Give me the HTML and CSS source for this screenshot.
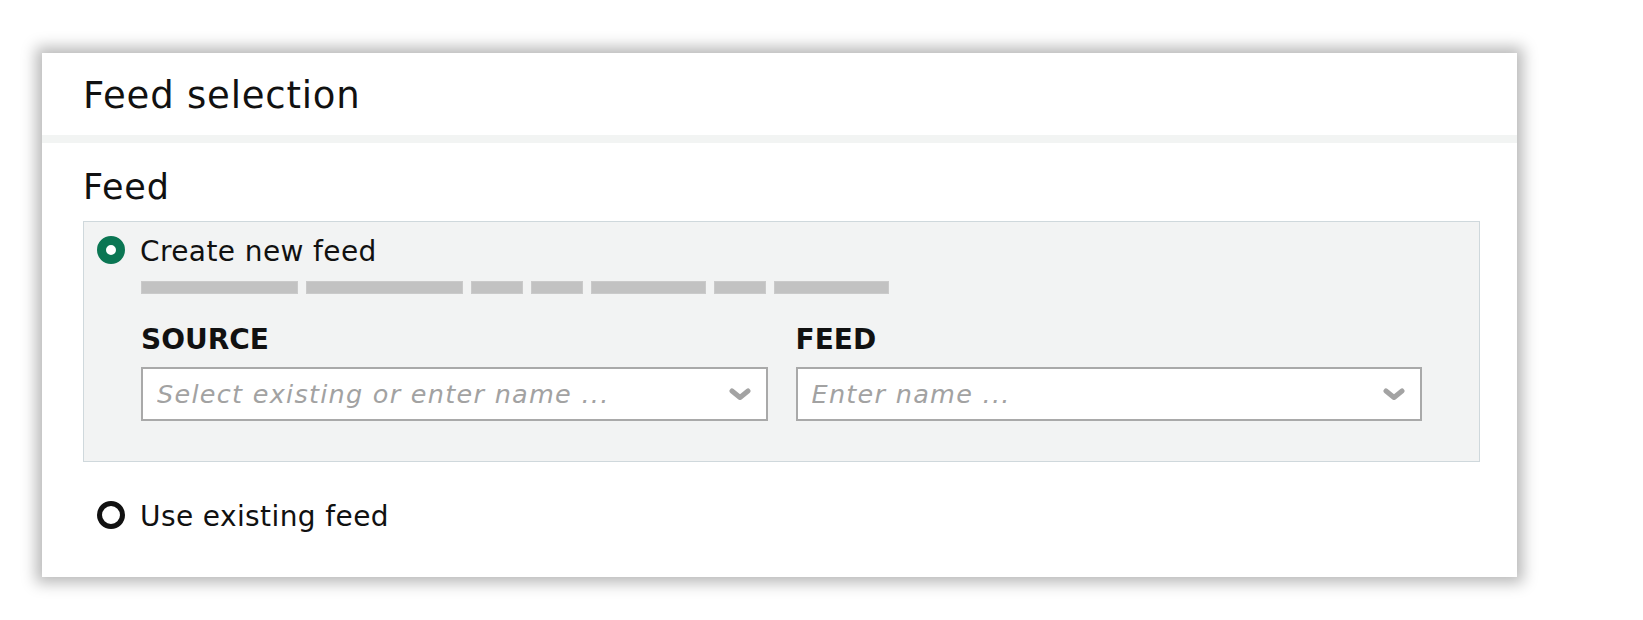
FILE: index.html
```html
<!DOCTYPE html>
<html lang="en">
<head>
  <meta charset="UTF-8">
  <title>Feed selection</title>
  <link rel="stylesheet" href="styles.css">
</head>

<body>

  <div class="panel">
    <div class="panel-header">
      <h1>Feed selection</h1>
    </div>

    <div class="panel-body">
      <h2 class="field-title">Feed</h2>

      <!-- Option 1: new feed, expanded -->
      <div class="option-box">
        <label class="radio-row">
          <input type="radio" name="feed-mode" checked>
          <span>Create new feed</span>
        </label>

        <div class="option-details">
          <div class="skeleton">
            <span class="bar w-lg"></span>
            <span class="bar w-lg"></span>
            <span class="bar w-sm"></span>
            <span class="bar w-sm"></span>
            <span class="bar w-md"></span>
            <span class="bar w-sm"></span>
            <span class="bar w-md"></span>
          </div>

          <div class="field-grid">
            <div class="field">
              <label class="field-label" for="source-name">SOURCE</label>
              <div class="select-wrap">
                <input type="text" id="source-name" placeholder="Select existing or enter name ...">
                <svg class="chevron" viewBox="0 0 22 12" width="22" height="12">
                  <polyline points="3,3 11,9.5 19,3" />
                </svg>
              </div>
            </div>
            <div class="field">
              <label class="field-label" for="feed-name">FEED</label>
              <div class="select-wrap">
                <input type="text" id="feed-name" placeholder="Enter name ...">
                <svg class="chevron" viewBox="0 0 22 12" width="22" height="12">
                  <polyline points="3,3 11,9.5 19,3" />
                </svg>
              </div>
            </div>
          </div>
        </div>
      </div>

      <!-- Option 2: existing feed -->
      <label class="radio-row existing">
        <input type="radio" name="feed-mode">
        <span>Use existing feed</span>
      </label>
    </div>
  </div>

</body>
</html>
```

FILE: styles.css
```css
body {
  margin: 0;
  padding: 53px 0 43px 42px;
  background: #fff;
  font-family: "DejaVu Sans", Verdana, sans-serif;
  color: #111;
}

.panel {
  width: 1475px;
  background: #fff;
  box-shadow: 0 0 14px 6px rgba(0, 0, 0, 0.28);
}

.panel-header {
  box-sizing: border-box;
  height: 90px;
  display: flex;
  align-items: center;
  padding: 3px 0 0 41px;
  border-bottom: 8px solid #f2f4f3;
}

.panel-header h1 {
  margin: 0;
  font-size: 37px;
  font-weight: 400;
  line-height: 42px;
  letter-spacing: 0.8px;
}

.panel-body {
  padding: 24px 37px 47px 41px;
}

.field-title {
  margin: 0;
  font-size: 35px;
  font-weight: 400;
  line-height: 40px;
  letter-spacing: 0.8px;
}

.option-box {
  margin-top: 14px;
  background: #f2f3f3;
  border: 1px solid #cfd8dc;
  padding: 13px 57px 40px 13px;
}

.radio-row {
  display: flex;
  align-items: center;
  gap: 15px;
  height: 30px;
  font-size: 28px;
  line-height: 30px;
  letter-spacing: 0.4px;
  cursor: pointer;
}

.radio-row span {
  padding-top: 3px;
}

.radio-row input {
  appearance: none;
  -webkit-appearance: none;
  box-sizing: border-box;
  width: 28px;
  height: 28px;
  margin: 0;
  border-radius: 50%;
  border: 5px solid #111;
  background: #fff;
  flex-shrink: 0;
}

.radio-row input:checked {
  border: 9px solid #0b7653;
}

.radio-row.existing {
  margin-top: 38px;
  margin-left: 14px;
}

.option-details {
  margin-left: 44px;
}

.skeleton {
  display: flex;
  gap: 8px;
  margin-top: 16px;
}

.bar {
  height: 13px;
  background: #c2c2c2;
  box-shadow: inset 0 0 0 1px #cacaca;
}

.w-lg { width: 157px; }
.w-md { width: 115px; }
.w-sm { width: 52px; }

.field-grid {
  display: grid;
  grid-template-columns: 1fr 1fr;
  gap: 28px;
  margin-top: 31px;
}

.field-label {
  display: block;
  font-size: 28px;
  font-weight: 700;
  line-height: 30px;
}

.select-wrap {
  position: relative;
  margin-top: 12px;
}

.select-wrap input {
  box-sizing: border-box;
  width: 100%;
  height: 54px;
  margin: 0;
  padding: 0 50px 0 14px;
  border: 2px solid #a9a9a9;
  background: #fff;
  font-family: inherit;
  font-size: 25.5px;
  letter-spacing: 0.05em;
  outline: none;
}

.select-wrap input::placeholder {
  color: #a2a2a2;
  font-style: italic;
}

.chevron {
  position: absolute;
  right: 17px;
  top: 21px;
}

.chevron polyline {
  fill: none;
  stroke: #a3a3a3;
  stroke-width: 5;
  stroke-linecap: round;
  stroke-linejoin: round;
}
```
